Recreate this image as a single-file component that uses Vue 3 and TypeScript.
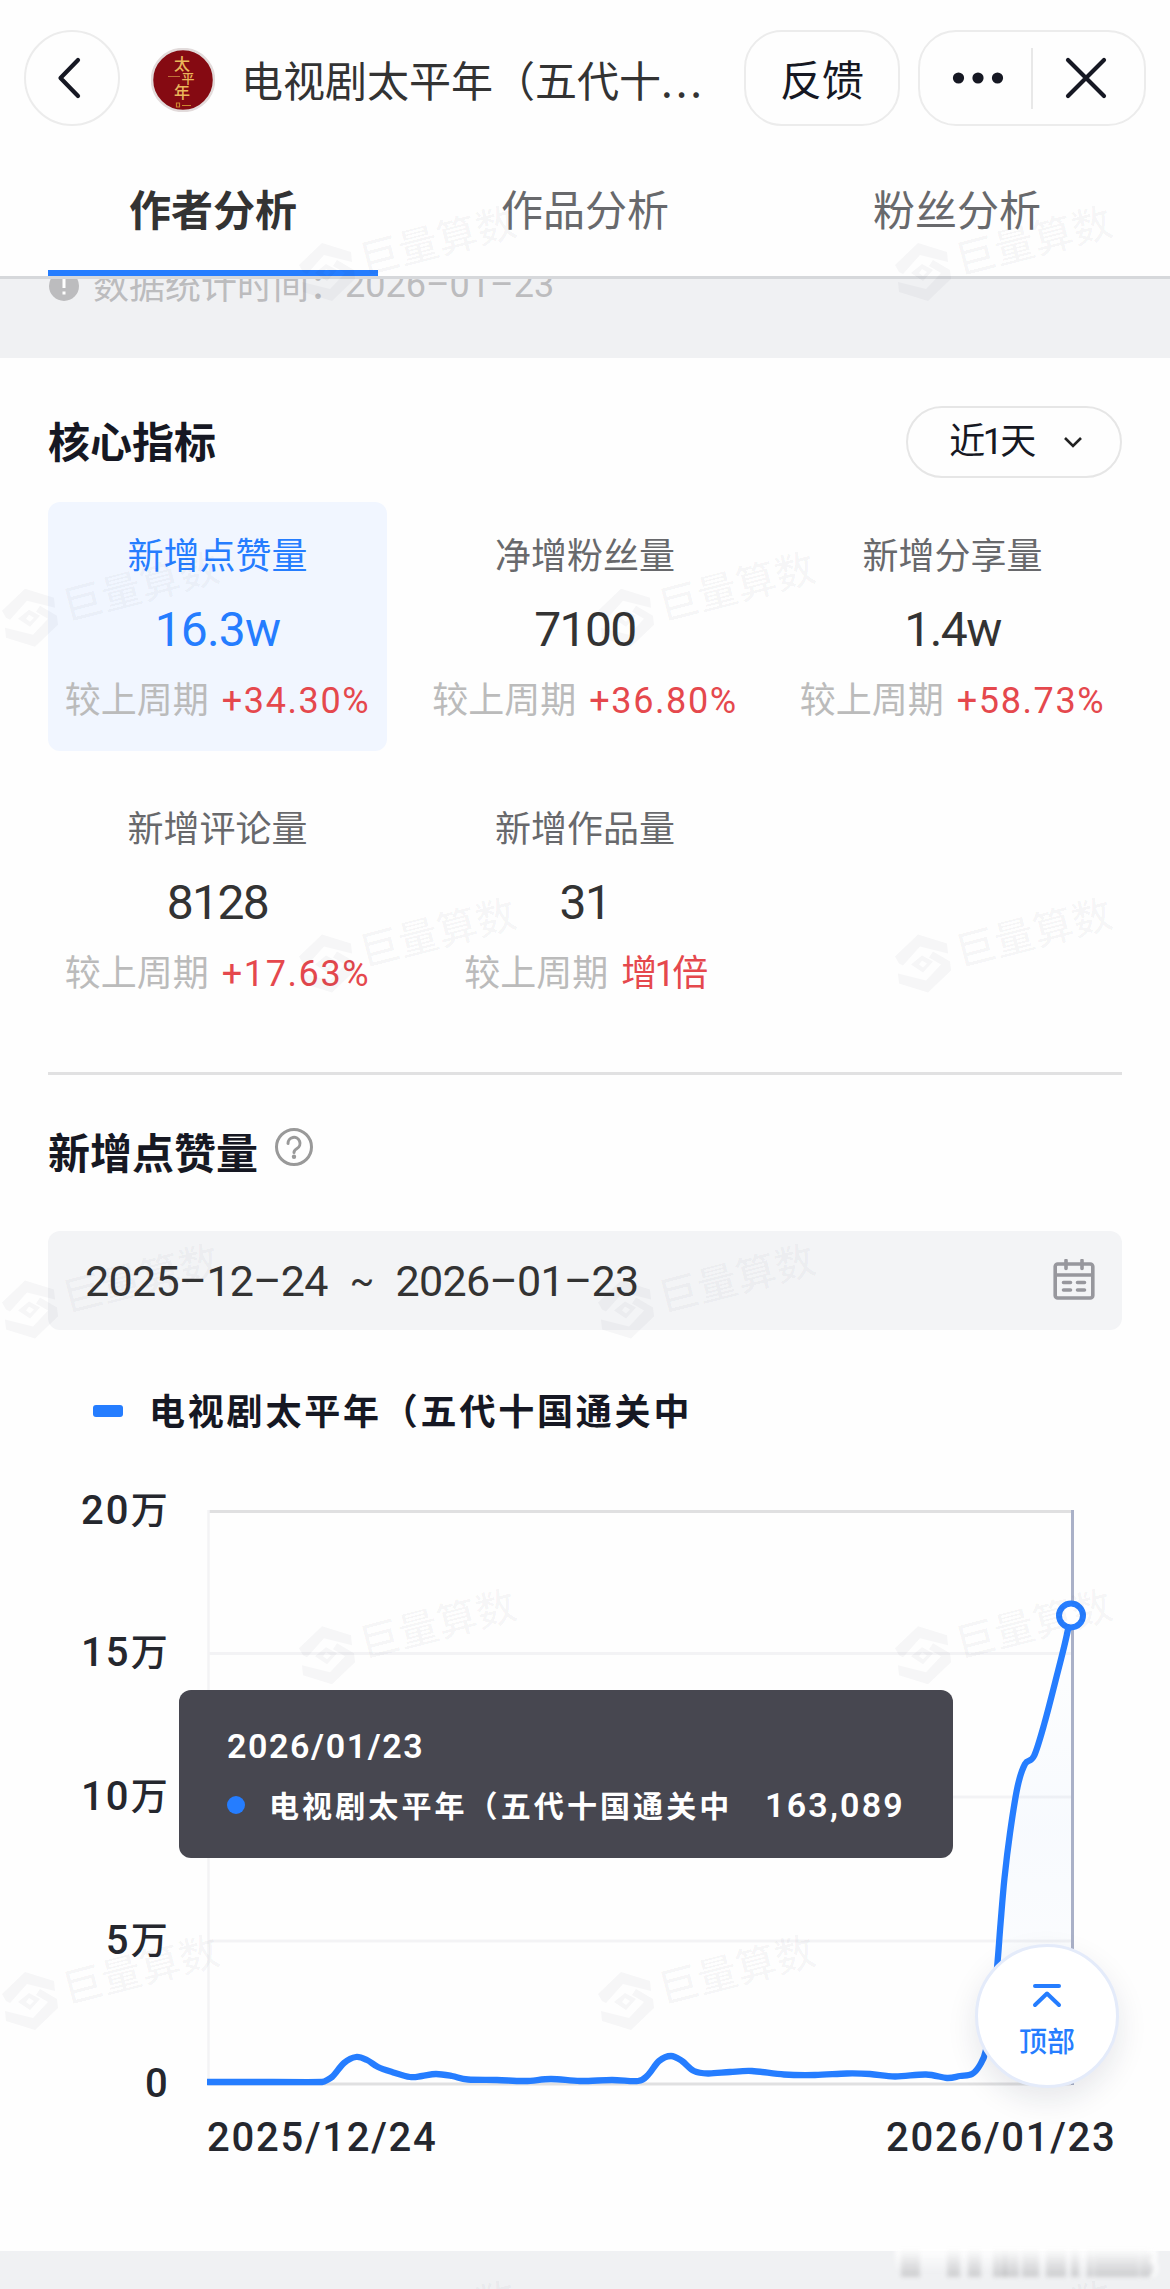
<script setup lang="ts">
import { computed, ref } from 'vue'

interface Metric {
  name: string
  value: string
  change: string
  tight?: boolean
}

type Point = [number, number]

const tabs = ['作者分析', '作品分析', '粉丝分析']
const activeTab = ref(0)

const metrics: Metric[] = [
  { name: '新增点赞量', value: '16.3w', change: '+34.30%' },
  { name: '净增粉丝量', value: '7100', change: '+36.80%' },
  { name: '新增分享量', value: '1.4w', change: '+58.73%' },
  { name: '新增评论量', value: '8128', change: '+17.63%' },
  { name: '新增作品量', value: '31', change: '增1倍', tight: true },
]
const activeMetric = ref(0)

const series = '电视剧太平年（五代十国通关中'

const yTicks = [
  { value: '20', unit: '万', y: 51.5 },
  { value: '15', unit: '万', y: 193.5 },
  { value: '10', unit: '万', y: 337 },
  { value: '5', unit: '万', y: 481 },
  { value: '0', unit: '', y: 624 },
]

const points: Point[] = [
  [207, 622], [265, 622], [322, 622], [332, 617], [344, 603], [356, 597], [367, 600],
  [378, 607], [392, 612], [410, 617], [422, 616], [436, 614], [452, 616], [468, 619.5],
  [497, 620], [525, 621], [551, 619], [580, 621], [612, 620], [638, 621], [648, 615],
  [659, 601], [671, 596], [682, 601], [694, 611], [708, 613.5], [730, 612], [752, 611],
  [784, 614.5], [815, 615], [847, 613.5], [870, 614], [895, 616.5], [926, 614.5],
  [947, 618], [960, 616], [972, 614], [980, 605], [986, 590], [992, 550], [997, 508],
  [1000.5, 464], [1004.5, 418], [1010, 373], [1017.5, 327], [1025, 304],
  [1034, 296], [1044.5, 263], [1057.5, 213], [1065, 183], [1071, 155.5],
]

// Catmull-Rom through every point
const linePath = computed(() => {
  let d = `M${points[0].join(',')}`
  for (let i = 0; i < points.length - 1; i++) {
    const p0 = points[Math.max(i - 1, 0)]
    const p1 = points[i]
    const p2 = points[i + 1]
    const p3 = points[Math.min(i + 2, points.length - 1)]
    const k = i < 3 ? 0.04 : 1 / 6
    const c1 = [p1[0] + (p2[0] - p0[0]) * k, p1[1] + (p2[1] - p0[1]) * k]
    const c2 = [p2[0] - (p3[0] - p1[0]) * k, p2[1] - (p3[1] - p1[1]) * k]
    d += `C${c1.join(',')} ${c2.join(',')} ${p2.join(',')}`
  }
  return d
})

const areaPath = computed(() => `${linePath.value}V624H207Z`)

// brick pattern: odd rows are shifted by half a tile
const marks = Array.from({ length: 7 }, (_, row) =>
  [0, 1].map((col) => ({ x: (row % 2 ? 30 : 327) + col * 596, y: 272 + row * 345.8 })),
).flat()

const smears = [
  [901, 19], [947, 13], [968, 13], [993, 13], [1004, 15], [1022, 17], [1046, 20],
  [1071, 8], [1087, 6], [1094, 33], [1127, 12], [1140, 12],
]
</script>

<template>
  <div class="page">
    <header class="header">
      <div class="nav">
        <button class="back" aria-label="返回">
          <svg width="92" height="92" viewBox="0 0 92 92">
            <path d="M52 28 34.500 46 52 64" fill="none" stroke="#161823" stroke-width="4.200" stroke-linecap="round" stroke-linejoin="round" />
          </svg>
        </button>
        <svg class="avatar" width="64" height="64" viewBox="0 0 64 64">
          <circle cx="32" cy="32" r="31" fill="#850a12" stroke="#e2dbdb" stroke-width="2.500" />
          <g fill="#eab65a" class="avatar-text" text-anchor="middle">
            <text x="31" y="22" font-size="16">太</text>
            <text x="37" y="35" font-size="13">平</text>
            <text x="31" y="50" font-size="16">年</text>
          </g>
          <path d="M17 28.500h12" stroke="#c07038" stroke-width="1" />
          <path d="M25.500 55h3v4h-3zM31 57.500h9" stroke="#c9862f" stroke-width="1.200" fill="none" />
        </svg>
        <h1 class="title">电视剧太平年（五代十<span class="dots">...</span></h1>
        <button class="feedback">反馈</button>
        <div class="capsule">
          <svg width="224" height="92" viewBox="0 0 224 92">
            <g fill="#161823">
              <circle cx="38.500" cy="46" r="5.600" />
              <circle cx="58" cy="46" r="5.600" />
              <circle cx="77.500" cy="46" r="5.600" />
            </g>
            <path d="M112 16v61" stroke="#e8e8e8" stroke-width="2" />
            <path d="m148 28 36 36M184 28l-36 36" stroke="#161823" stroke-width="4.200" stroke-linecap="round" />
          </svg>
        </div>
      </div>
      <nav class="tabs">
        <button
          v-for="(tab, i) in tabs"
          :key="tab"
          class="tab"
          :class="{ active: i === activeTab }"
          @click="activeTab = i"
        >
          {{ tab }}
        </button>
      </nav>
    </header>

    <div class="notice">
      <div class="notice-row">
        <svg width="30" height="30" viewBox="0 0 30 30">
          <circle cx="15" cy="15" r="15" fill="#bcbcbe" />
          <path d="M15 7v10M15 20.500v3" stroke="#fff" stroke-width="3" />
        </svg>
        <span>数据统计时间：</span>
        <span class="notice-date num">2026–01–23</span>
      </div>
    </div>

    <section class="core">
      <div class="core-head">
        <h2>核心指标</h2>
        <button class="period">
          <span class="num tight">近1天</span>
          <svg width="20" height="14" viewBox="0 0 20 14">
            <path d="m2 3 8 8 8-8" fill="none" stroke="#222" stroke-width="2.600" />
          </svg>
        </button>
      </div>
      <div class="metrics">
        <div
          v-for="(m, i) in metrics"
          :key="m.name"
          class="metric"
          :class="{ active: i === activeMetric }"
          @click="activeMetric = i"
        >
          <div class="metric-name">{{ m.name }}</div>
          <div class="metric-value num">{{ m.value }}</div>
          <div class="metric-change">
            <span>较上周期</span>
            <span class="up num" :class="{ tight: m.tight }">{{ m.change }}</span>
          </div>
        </div>
      </div>
    </section>

    <section class="trend">
      <div class="trend-head">
        <h2>新增点赞量</h2>
        <svg width="40" height="40" viewBox="0 0 40 40" fill="none" stroke="#999" stroke-width="3">
          <circle cx="20" cy="20" r="17.500" />
          <path d="M14 16.500a6 6 0 1 1 9 5c-2.100 1.200-3 1.900-3 4" stroke-linecap="round" />
          <circle cx="20" cy="29.800" r="2.200" fill="#999" stroke="none" />
        </svg>
      </div>
      <div class="range num">
        <span>2025–12–24</span>
        <span class="tilde">~</span>
        <span>2026–01–23</span>
        <svg class="calendar" width="44" height="44" viewBox="0 0 44 44" fill="none" stroke="#97979d" stroke-width="3.600">
          <rect x="3.200" y="5" width="37.600" height="34" rx="2.500" />
          <path d="M3 16h38" />
          <path d="M14 1.500v8M30 1.500v8M11.500 23.500h7M25.500 23.500h7M11.500 31h7M25.500 31h7" stroke-linecap="round" />
        </svg>
      </div>
      <div class="legend">
        <i class="swatch"></i>
        <span>{{ series }}</span>
      </div>
      <div class="chart">
        <svg width="1170" height="720" viewBox="0 0 1170 720">
          <defs>
            <linearGradient id="area" x1="0" y1="155" x2="0" y2="624" gradientUnits="userSpaceOnUse">
              <stop offset="0" stop-color="#259dff" stop-opacity="0" />
              <stop offset="0.450" stop-color="#257dff" stop-opacity="0.030" />
              <stop offset="1" stop-color="#257dff" stop-opacity="0" />
            </linearGradient>
          </defs>
          <path
            v-for="(t, i) in yTicks"
            :key="t.value"
            :d="`M208 ${t.y}H1071`"
            :stroke="i === 0 || i === 4 ? '#e0e0e1' : '#f3f3f5'"
            stroke-width="3"
          />
          <path d="M208.500 50V624" stroke="#f3f3f5" stroke-width="2.500" />
          <path :d="areaPath" fill="url(#area)" />
          <path d="M1072.500 50V625" stroke="#aab1c8" stroke-width="3" />
          <path :d="linePath" fill="none" stroke="#257dff" stroke-width="6.300" stroke-linejoin="round" />
          <circle cx="1071" cy="155.500" r="12" fill="#fff" stroke="#257dff" stroke-width="6" />
          <g class="axis num">
            <text
              v-for="t in yTicks"
              :key="t.value"
              x="170"
              :y="t.y + 12.5"
              text-anchor="end"
            >{{ t.value }}<tspan class="unit">{{ t.unit }}</tspan></text>
            <text x="207" y="690.500" textLength="231">2025/12/24</text>
            <text x="886" y="690.500" textLength="231">2026/01/23</text>
          </g>
        </svg>
        <div class="tooltip">
          <div class="tooltip-date num">2026/01/23</div>
          <div class="tooltip-row">
            <i class="dot"></i>
            <span class="tooltip-name">{{ series }}</span>
            <span class="tooltip-value num">163,089</span>
          </div>
        </div>
      </div>
    </section>

    <footer class="footer"></footer>

    <svg class="watermark" width="1170" height="2289" viewBox="0 0 1170 2289">
      <g v-for="(m, i) in marks" :key="i" :transform="`translate(${m.x} ${m.y})`">
        <path d="M-28-7-5-29 24-20 25-10-3-17-20 2-24 0ZM28 7 5 29-24 20-25 10 3 17 18 1 6-6 10-12 27-2Z" />
        <path d="M-12 1-1-8 10-2 0 9ZM-4 1 0 4 4 0-1-3Z" fill-rule="evenodd" />
        <text transform="rotate(-14.5)" x="35" y="12">巨量算数</text>
      </g>
    </svg>

    <svg class="smear" width="275" height="40" viewBox="890 2245 275 40">
      <defs>
        <linearGradient id="smear" x1="0" y1="2248" x2="0" y2="2278" gradientUnits="userSpaceOnUse">
          <stop offset="0" stop-color="#8a8a8c" stop-opacity="0" />
          <stop offset="1" stop-color="#8a8a8c" stop-opacity="0.340" />
        </linearGradient>
        <linearGradient id="smear-top" x1="0" y1="2249" x2="0" y2="2272" gradientUnits="userSpaceOnUse">
          <stop offset="0" stop-color="#fff" />
          <stop offset="1" stop-color="#fff" stop-opacity="0" />
        </linearGradient>
      </defs>
      <rect x="895" y="2249" width="262" height="23" fill="url(#smear-top)" />
      <rect v-for="s in smears" :key="s[0]" :x="s[0]" y="2248" :width="s[1]" height="29" fill="url(#smear)" />
      <path d="M1148 2252q9-1 8 5-1 4-6 4 8 1 7 8-1 6-7 7" fill="none" stroke="#fff" stroke-width="2.500" />
    </svg>

    <button class="to-top">
      <svg width="32" height="26" viewBox="0 0 32 26" fill="none" stroke="#257dff" stroke-width="4" stroke-linecap="round" stroke-linejoin="round">
        <path d="M4 3h24M4 22 16 10.500 28 22" />
      </svg>
      <span>顶部</span>
    </button>
  </div>
</template>

<style>
body {
  background: #fefefe;
}
</style>

<style scoped>
.page {
  position: relative;
  width: 1170px;
  height: 2289px;
  overflow: hidden;
  background: #fefefe;
  color: #161823;
  font-family: 'Noto Sans CJK SC', sans-serif;
}

button {
  box-sizing: border-box;
  padding: 0;
  border: none;
  background: none;
  color: inherit;
  font-family: inherit;
}

svg {
  display: block;
  flex: none;
}

h1,
h2 {
  margin: 0;
}

.num {
  font-family: Roboto, 'Noto Sans CJK SC', sans-serif;
}

.header {
  box-sizing: border-box;
  height: 279px;
  border-bottom: 3px solid #d6d8db;
}

.nav {
  display: flex;
  align-items: center;
  padding: 30px 24px 0;
}

.back,
.feedback,
.capsule {
  box-sizing: border-box;
  flex: none;
  height: 96px;
  border: 2px solid #ececec;
}

.back {
  width: 96px;
  border-radius: 50%;
}

.avatar {
  margin: 4px 0 0 31px;
}

.avatar-text {
  font-weight: 500;
}

.title {
  flex: 1;
  margin-left: 26px;
  padding-top: 2px;
  color: #333;
  font-size: 42px;
  font-weight: 400;
  line-height: 60px;
  white-space: nowrap;
}

.dots {
  letter-spacing: 3px;
}

.feedback {
  width: 156px;
  border-radius: 38px;
  font-size: 42px;
  line-height: 86px;
}

.capsule {
  width: 228px;
  margin-left: 18px;
  border-radius: 38px;
}

.tabs {
  display: grid;
  grid-template-columns: repeat(3, 372px);
  justify-content: center;
  margin-top: 18px;
}

.tab {
  height: 132px;
  margin: 0 21px;
  padding-top: 2px;
  border-bottom: 6px solid transparent;
  color: #68696c;
  font-size: 42px;
  line-height: 120px;
}

.tab.active {
  border-color: #257dff;
  color: #333;
  font-weight: 600;
}

.notice {
  height: 79px;
  overflow: hidden;
  background: #f0f1f3;
}

.notice-row {
  display: flex;
  align-items: center;
  margin-top: -16px;
  padding-left: 49px;
  color: #bcbcbe;
  font-size: 36px;
  line-height: 36px;
}

.notice-row svg {
  margin: 6px 14px 0 0;
}

.notice-date {
  margin-top: 4px;
}

.core {
  height: 714px;
  margin: 0 48px;
  border-bottom: 3px solid #e1e1e2;
}

.core-head {
  display: flex;
  align-items: center;
  justify-content: space-between;
  padding-top: 48px;
}

h2 {
  font-size: 42px;
  font-weight: 600;
  line-height: 60px;
}

.core-head h2 {
  margin-top: -4px;
}

.period {
  display: flex;
  align-items: center;
  justify-content: center;
  gap: 29px;
  width: 216px;
  height: 72px;
  padding: 0 0 0 4px;
  border: 2px solid #e6e6e6;
  border-radius: 36px;
  font-size: 36px;
  line-height: 60px;
}

.metrics {
  display: grid;
  grid-template-columns: repeat(3, 339px);
  gap: 24px 28.5px;
  margin-top: 24px;
}

.metric {
  box-sizing: border-box;
  height: 249px;
  padding-top: 25px;
  border-radius: 12px;
  text-align: center;
  white-space: nowrap;
}

.metric-name {
  color: #68696c;
  font-size: 36px;
  line-height: 52px;
}

.metric-value {
  margin-top: 19px;
  color: #333;
  font-size: 48px;
  line-height: 64px;
  letter-spacing: -1.6px;
}

.metric-change {
  display: flex;
  align-items: baseline;
  justify-content: center;
  gap: 13px;
  margin-top: 9px;
  color: #bbb;
  font-size: 36px;
  line-height: 52px;
}

.up {
  color: #e5484d;
  letter-spacing: 1.6px;
}

.tight {
  letter-spacing: -2.5px;
}

.metric.active {
  background: #f1f6ff;
}

.metric.active .metric-name,
.metric.active .metric-value {
  color: #257dff;
}

.metric.active .metric-value {
  letter-spacing: -0.8px;
}

.trend {
  height: 1176px;
}

.trend-head {
  display: flex;
  gap: 16px;
  padding: 46px 48px 0;
}

.trend-head svg {
  margin-top: 6px;
}

.range {
  display: flex;
  align-items: center;
  height: 99px;
  margin: 50px 48px 0;
  padding: 0 26px 0 37px;
  border-radius: 12px;
  background: #f3f4f6;
  box-sizing: border-box;
  color: #333;
  font-size: 43px;
  letter-spacing: -0.7px;
}

.tilde {
  margin: 0 22px;
  font-size: 36px;
}

.calendar {
  margin-left: auto;
}

.legend {
  display: flex;
  align-items: center;
  gap: 26px;
  height: 60px;
  margin: 51px 0 0 93px;
  font-size: 36px;
  font-weight: 600;
  letter-spacing: 2.8px;
  white-space: nowrap;
}

.legend span {
  margin-top: -4px;
}

.swatch {
  width: 30px;
  height: 12px;
  border-radius: 3px;
  background: #257dff;
}

.chart {
  position: relative;
  margin-top: 19px;
}

.axis {
  fill: #25272e;
  font-size: 40px;
  font-weight: 500;
  letter-spacing: 2.2px;
}

.unit {
  font-size: 37px;
}

.tooltip {
  position: absolute;
  z-index: 2;
  left: 179px;
  top: 230px;
  box-sizing: border-box;
  width: 774px;
  height: 168px;
  padding: 33px 48px 0 48px;
  border-radius: 12px;
  background: rgba(63, 63, 73, 0.96);
  color: #fff;
  font-weight: 600;
  white-space: nowrap;
}

.tooltip-date {
  font-size: 34px;
  line-height: 46px;
  letter-spacing: 1.6px;
}

.tooltip-row {
  display: flex;
  align-items: center;
  margin-top: 13px;
  line-height: 46px;
}

.dot {
  width: 18px;
  height: 18px;
  border-radius: 50%;
  background: #257dff;
}

.tooltip-name {
  margin: -3px 0 0 24px;
  font-size: 30px;
  letter-spacing: 3.1px;
}

.tooltip-value {
  margin-left: auto;
  font-size: 34px;
  letter-spacing: 2.2px;
}

.footer {
  height: 38px;
  background: #f0f1f3;
}

.watermark {
  position: absolute;
  left: 0;
  top: 0;
  z-index: 1;
  fill: rgba(20, 24, 60, 0.035);
  font-size: 40px;
  font-weight: 500;
  pointer-events: none;
}

.smear {
  position: absolute;
  left: 890px;
  top: 2245px;
  filter: blur(2px);
}

.to-top {
  position: absolute;
  z-index: 3;
  left: 975px;
  top: 1944px;
  display: flex;
  flex-direction: column;
  align-items: center;
  width: 144px;
  height: 144px;
  padding-top: 36px;
  border: 3px solid #e4ebfa;
  border-radius: 50%;
  background: #fff;
  box-shadow: 0 12px 30px rgba(20, 30, 60, 0.1);
  color: #257dff;
  font-size: 28px;
  font-weight: 500;
  line-height: 40px;
}

.to-top span {
  margin-top: 11px;
}
</style>
